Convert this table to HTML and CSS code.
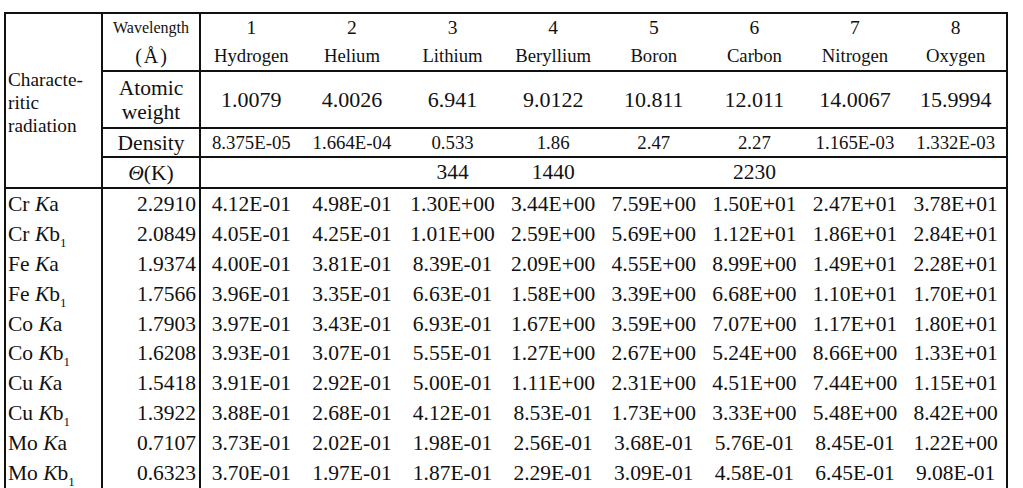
FILE: index.html
```html
<!DOCTYPE html>
<html lang="en">
<head>
<meta charset="utf-8">
<title>Characteristic radiation table</title>
<link rel="stylesheet" href="styles.css">
</head>
<body>
<div class="wrap">
<table class="xs">
  <colgroup>
    <col class="c-lab"><col class="c-wl">
    <col class="c-el"><col class="c-el"><col class="c-el"><col class="c-el">
    <col class="c-el"><col class="c-el"><col class="c-el"><col class="c-el">
  </colgroup>
  <thead>
    <tr class="r-name">
      <th rowspan="4" class="lab-h">Characte-<br>ritic<br>radiation</th>
      <th class="wl-h"><div class="wl-t">Wavelength</div><div class="ang">(Å)</div></th>
      <th class="el"><div class="z">1</div><div class="nm">Hydrogen</div></th>
      <th class="el"><div class="z">2</div><div class="nm">Helium</div></th>
      <th class="el"><div class="z">3</div><div class="nm">Lithium</div></th>
      <th class="el"><div class="z">4</div><div class="nm">Beryllium</div></th>
      <th class="el"><div class="z">5</div><div class="nm">Boron</div></th>
      <th class="el"><div class="z">6</div><div class="nm">Carbon</div></th>
      <th class="el"><div class="z">7</div><div class="nm">Nitrogen</div></th>
      <th class="el"><div class="z">8</div><div class="nm">Oxygen</div></th>
    </tr>
    <tr class="r-aw">
      <th class="hd aw">Atomic<br>weight</th>
      <td>1.0079</td><td>4.0026</td><td>6.941</td><td>9.0122</td>
      <td>10.811</td><td>12.011</td><td>14.0067</td><td>15.9994</td>
    </tr>
    <tr class="r-den">
      <th class="hd">Density</th>
      <td>8.375E-05</td><td>1.664E-04</td><td>0.533</td><td>1.86</td>
      <td>2.47</td><td>2.27</td><td>1.165E-03</td><td>1.332E-03</td>
    </tr>
    <tr class="r-th">
      <th class="hd"><i>Θ</i>(K)</th>
      <td></td><td></td><td>344</td><td>1440</td>
      <td></td><td>2230</td><td></td><td></td>
    </tr>
  </thead>
  <tbody>
    <tr><td class="lab">Cr <i>K</i>a</td><td class="wl">2.2910</td><td>4.12E-01</td><td>4.98E-01</td><td>1.30E+00</td><td>3.44E+00</td><td>7.59E+00</td><td>1.50E+01</td><td>2.47E+01</td><td>3.78E+01</td></tr>
    <tr><td class="lab">Cr <i>K</i>b<sub>1</sub></td><td class="wl">2.0849</td><td>4.05E-01</td><td>4.25E-01</td><td>1.01E+00</td><td>2.59E+00</td><td>5.69E+00</td><td>1.12E+01</td><td>1.86E+01</td><td>2.84E+01</td></tr>
    <tr><td class="lab">Fe <i>K</i>a</td><td class="wl">1.9374</td><td>4.00E-01</td><td>3.81E-01</td><td>8.39E-01</td><td>2.09E+00</td><td>4.55E+00</td><td>8.99E+00</td><td>1.49E+01</td><td>2.28E+01</td></tr>
    <tr><td class="lab">Fe <i>K</i>b<sub>1</sub></td><td class="wl">1.7566</td><td>3.96E-01</td><td>3.35E-01</td><td>6.63E-01</td><td>1.58E+00</td><td>3.39E+00</td><td>6.68E+00</td><td>1.10E+01</td><td>1.70E+01</td></tr>
    <tr><td class="lab">Co <i>K</i>a</td><td class="wl">1.7903</td><td>3.97E-01</td><td>3.43E-01</td><td>6.93E-01</td><td>1.67E+00</td><td>3.59E+00</td><td>7.07E+00</td><td>1.17E+01</td><td>1.80E+01</td></tr>
    <tr><td class="lab">Co <i>K</i>b<sub>1</sub></td><td class="wl">1.6208</td><td>3.93E-01</td><td>3.07E-01</td><td>5.55E-01</td><td>1.27E+00</td><td>2.67E+00</td><td>5.24E+00</td><td>8.66E+00</td><td>1.33E+01</td></tr>
    <tr><td class="lab">Cu <i>K</i>a</td><td class="wl">1.5418</td><td>3.91E-01</td><td>2.92E-01</td><td>5.00E-01</td><td>1.11E+00</td><td>2.31E+00</td><td>4.51E+00</td><td>7.44E+00</td><td>1.15E+01</td></tr>
    <tr><td class="lab">Cu <i>K</i>b<sub>1</sub></td><td class="wl">1.3922</td><td>3.88E-01</td><td>2.68E-01</td><td>4.12E-01</td><td>8.53E-01</td><td>1.73E+00</td><td>3.33E+00</td><td>5.48E+00</td><td>8.42E+00</td></tr>
    <tr><td class="lab">Mo <i>K</i>a</td><td class="wl">0.7107</td><td>3.73E-01</td><td>2.02E-01</td><td>1.98E-01</td><td>2.56E-01</td><td>3.68E-01</td><td>5.76E-01</td><td>8.45E-01</td><td>1.22E+00</td></tr>
    <tr><td class="lab">Mo <i>K</i>b<sub>1</sub></td><td class="wl">0.6323</td><td>3.70E-01</td><td>1.97E-01</td><td>1.87E-01</td><td>2.29E-01</td><td>3.09E-01</td><td>4.58E-01</td><td>6.45E-01</td><td>9.08E-01</td></tr>
  </tbody>
</table>
</div>
</body>
</html>
```

FILE: styles.css
```css
html, body {
  margin: 0;
  padding: 0;
  background: #fff;
}

.wrap {
  padding: 12px 0 0 4px;
  font-family: "Liberation Serif", "Tinos", "Times New Roman", "DejaVu Serif", serif;
}

.xs {
  border-collapse: separate;
  border-spacing: 0;
  table-layout: fixed;
  width: 1004px;
  border: 2px solid #111;
  font-family: "Liberation Serif", "Tinos", "Times New Roman", "DejaVu Serif", serif;
  color: #111;
}

.c-lab { width: 97px; }
.c-wl { width: 98px; }
.c-el { width: 100.6px; }

.xs th,
.xs td {
  padding: 0;
  font-family: "Liberation Serif", "Tinos", "Times New Roman", "DejaVu Serif", serif;
  font-weight: normal;
  text-align: center;
  vertical-align: middle;
  white-space: nowrap;
  box-sizing: border-box;
}

/* header */
.lab-h {
  text-align: left !important;
  font-size: 19.3px;
  line-height: 23px;
  padding-left: 2px !important;
  padding-top: 4px !important;
  border-right: 2px solid #111;
  border-bottom: 2px solid #111;
}

.wl-h,
.hd {
  border-right: 2px solid #111;
}

.r-name th,
.r-aw th,
.r-aw td,
.r-den th,
.r-den td {
  border-bottom: 2px solid #111;
}

.r-th th,
.r-th td {
  border-bottom: 2px solid #111;
}

.r-name th { height: 56px; }
.r-aw th, .r-aw td { height: 57px; }
.r-den th, .r-den td { height: 29px; }
.r-th th, .r-th td { height: 31px; }

.wl-t {
  font-size: 16px;
  line-height: 28px;
}

.ang {
  font-size: 20px;
  line-height: 28px;
  letter-spacing: 2px;
  padding-left: 2px;
}

.z {
  font-size: 19.5px;
  line-height: 28px;
}

.nm {
  font-size: 18.7px;
  line-height: 28px;
}

.hd {
  font-size: 21.5px;
  line-height: 26px;
}

.aw {
  line-height: 24px;
}

.r-aw td {
  font-size: 22px;
}

.r-den td {
  font-size: 18.8px;
}

.r-th td {
  font-size: 21.5px;
}

.r-th i {
  font-style: italic;
}

/* body */
.xs tbody td {
  height: 29.9px;
  font-size: 21.5px;
  line-height: 26px;
}

.xs tbody td.lab {
  text-align: left;
  padding-left: 2px;
  border-right: 2px solid #111;
}

.xs tbody td.wl {
  text-align: right;
  padding-right: 3px;
  border-right: 2px solid #111;
}

.lab i {
  font-style: italic;
}

.lab sub {
  font-size: 13px;
  line-height: 0;
  vertical-align: -6px;
}
```
